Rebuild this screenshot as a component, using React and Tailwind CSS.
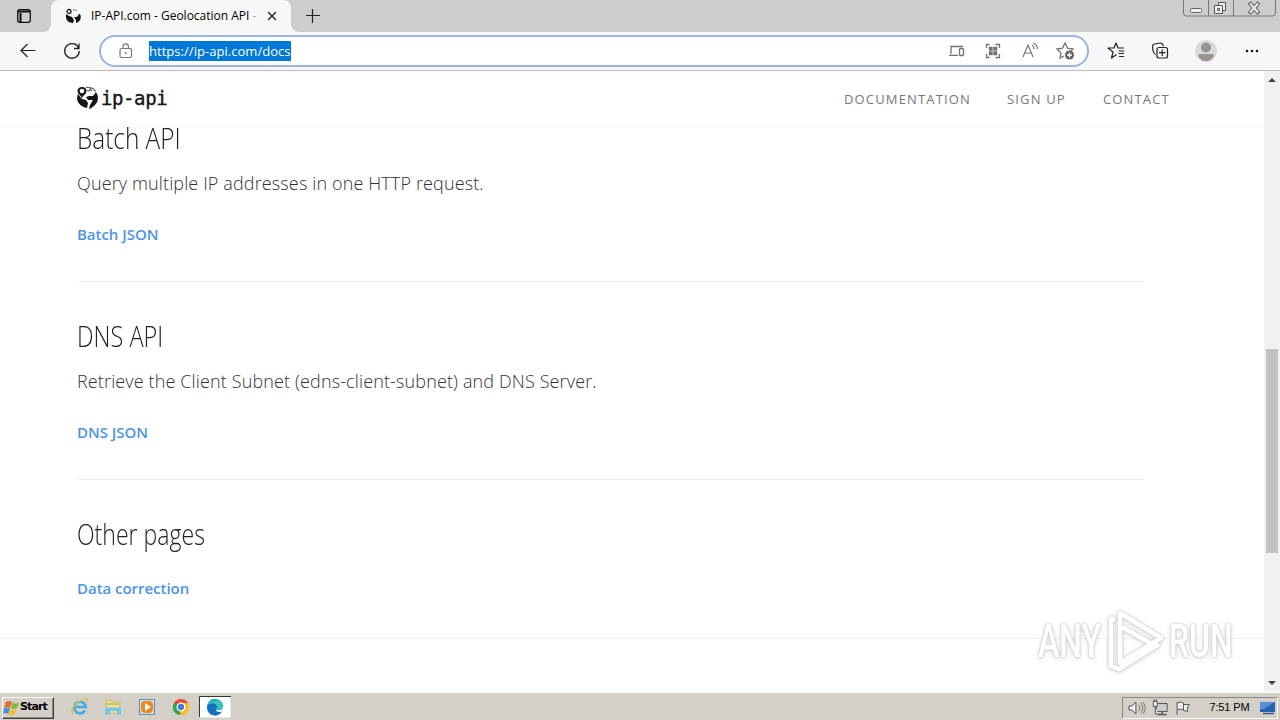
const links = [
  { label: 'DOCUMENTATION', className: 'w-[163px]' },
  { label: 'SIGN UP', className: 'w-24' },
  { label: 'CONTACT', className: 'w-[161px]' },
]

function Globe({ className }) {
  return (
    <svg className={className} viewBox="0 0 22 24" fill="#151515">
      <path d="M1 8l4 5 4 1 2 3-1 5c-5-1-9-4-10-9q0-3 1-5z" />
      <path d="M12 23l1-4 3-5-5 0-2-3 3-1 4 0 3-4q2 3 2 6 0 4-3 7-3 3-6 4z" />
      <path d="M5 1C2 1 .5 3 .5 5c0 3 3 4 4.500 7 1.500-3 4.500-4 4.500-7 0-2-1.500-4-4.500-4z" />
      <circle cx="5" cy="5" r="2.300" fill="#fff" />
      <path d="M9 1.500q6-1 10 4M10 4l2 1 1-2 2 2" fill="none" stroke="#666" strokeWidth="1.200" />
    </svg>
  )
}

function FavIcon() {
  return (
    <svg className="h-4 w-[17px]" viewBox="0 0 17 16" fill="#111">
      <path d="M1 6l3 2 3 1 2 3-1 3C4 15 1 12 1 9z" />
      <path d="M9 9l3 0 2-3 1 0c2 4 0 8-4 9l0-3z" />
      <circle cx="4" cy="3.500" r="2" fill="none" stroke="#222" strokeWidth="1.300" />
      <path d="M8 2q3-1 4 1" fill="none" stroke="#777" />
    </svg>
  )
}

function Tabs() {
  return (
    <div className="flex h-8 bg-[#cdcdcd]">
      <div className="w-[43px] pl-4 pt-2">
        <svg className="h-4 w-4" viewBox="0 0 16 16" fill="none" stroke="#111" strokeWidth="1.3">
          <rect x="1.7" y="1.7" width="12.6" height="12.6" rx="2" />
          <path d="M2 3.5h12M4.5 5v9" strokeWidth="2" />
        </svg>
      </div>
      <div className="flex w-2 items-end bg-[#f7f7f7]">
        <div className="h-full w-2 rounded-br-lg bg-[#cdcdcd]" />
      </div>
      <div className="bg-[#cdcdcd]">
        <div className="flex h-8 w-60 items-center rounded-t-lg bg-[#f7f7f7] pl-[14px]">
          <FavIcon />
          <span className="ml-[9px] w-[166px] overflow-hidden whitespace-nowrap font-['Open_Sans',sans-serif] text-[12px] text-black">
            IP-API.com - Geolocation API <span className="text-gray-400">-</span>
          </span>
          <svg className="ml-[9px] h-3 w-3 shrink-0" viewBox="0 0 12 12" stroke="#222" strokeWidth="1.4">
            <path d="M2 2l8 8M10 2l-8 8" />
          </svg>
        </div>
      </div>
      <div className="w-2 bg-[#f7f7f7]">
        <div className="h-full w-2 rounded-bl-lg bg-[#cdcdcd]" />
      </div>
      <svg className="ml-[6px] mt-2 h-4 w-4" viewBox="0 0 16 16" stroke="#222" strokeWidth="1.2">
        <path d="M1 7.5h14M7.500 1v14" />
      </svg>
      <svg className="ml-auto mr-1 h-[18px] w-[93px]" viewBox="0 0 93 18" fill="none" stroke="#777">
        <path d="M.5 0v13q0 3 3 3h86q3 0 3-3V0M25.500 0v16M50.500 0v16" />
        <rect x="7.500" y="8.500" width="11" height="4" rx="1" fill="#eee" stroke="#666" />
        <path d="M35.500 2.500h7v8h-7z" fill="#eee" stroke="#555" />
        <path d="M31.500 5.500h8v8h-8z" fill="#eee" stroke="#555" />
        <path d="M34.500 8.500h2v2h-2z" stroke="#555" />
        <path d="M67.500 4l7 8M74.500 4l-7 8" stroke="#555" strokeWidth="4" strokeLinecap="square" />
        <path d="M67.500 4l7 8M74.500 4l-7 8" stroke="#eee" strokeWidth="2" strokeLinecap="square" />
      </svg>
    </div>
  )
}

function AddressIcons() {
  return (
    <svg className="ml-auto mr-[11px] h-5 w-[128px]" viewBox="0 0 128 20" fill="none" stroke="#707070" strokeWidth="1.3">
      <path d="M3 13V5.500h12M1 14.300h9" />
      <rect x="11.500" y="7.500" width="4" height="7" rx="1" />
      <path d="M38.500 7V3.500h3M47.500 3.500h4V7M51.500 13v3.500h-4M41.500 16.500h-3V13" />
      <path d="M41 6h3.500v3.500h-3.500zM45.500 6h3.500v3.500h-3.500zM41 10.500h3.500v3.500h-3.500zM45.500 10.500h3.500v3.500h-3.500z" fill="#707070" stroke="#707070" strokeWidth=".4" />
      <path d="M75 16l5-12 5 12M77 12h6M84 4q2 1 2 4M85.500 2q4 2 4 6" strokeWidth="1.100" />
      <path d="M116 15l-4 2 1-5-4-4 5.500-.8L117 2l2.500 5.200L125 8l-2 2" />
      <circle cx="121.500" cy="14" r="4.500" fill="#606060" stroke="none" />
      <path d="M119 14h5M121.500 11.500v5" stroke="#fff" />
    </svg>
  )
}

function Toolbar() {
  return (
    <div className="flex h-[39px] items-center border-b border-[#bcbcbc] bg-[#f7f7f7]">
      <svg className="ml-5 h-4 w-4" viewBox="0 0 16 16" fill="none" stroke="#222" strokeWidth="1.2">
        <path d="M15.500 7.500H1M7.500 1L1 7.500 7.500 14" />
      </svg>
      <svg className="ml-[27px] h-[18px] w-[18px]" viewBox="0 0 18 18" fill="none" stroke="#222" strokeWidth="1.3">
        <path d="M15.700 6A7.300 7.300 0 1 0 16.300 9M16 1.500V6.500h-5" />
      </svg>
      <div className="ml-[18px] flex h-8 w-[990px] items-center rounded-full border-2 border-[#9bb5dd] bg-white">
        <svg className="ml-[18px] h-4 w-[14px]" viewBox="0 0 14 16" fill="none" stroke="#777" strokeWidth="1.2">
          <rect x="1" y="5.500" width="11.500" height="9" rx="1.500" />
          <path d="M4 5V3.500a2.700 2.700 0 0 1 5.400 0V5" />
          <circle cx="6.800" cy="10" r="1" fill="#777" stroke="none" />
        </svg>
        <span className="ml-4 h-5 w-[142px] overflow-hidden whitespace-nowrap bg-[#0078d7] font-['Open_Sans',sans-serif] text-[13px] leading-5 tracking-[0.04px] text-white">
          https://ip-api.com/docs
        </span>
        <AddressIcons />
      </div>
      <svg className="ml-[18px] h-6 w-[170px] shrink-0" viewBox="0 0 170 24" fill="none" stroke="#222" strokeWidth="1.2">
        <path d="M9.500 15.500L4.500 19l1.500-6-5-4h6L9 4l2 5h6M11.500 12h6M11.500 14.500h5.500M12 17.500h5" strokeLinejoin="round" />
        <path d="M48.500 15.500q-2-1-2.500-4l-.5-4q0-2 2-2.500l6-1q2 0 3 3" />
        <rect x="50" y="8.500" width="10.500" height="10.500" rx="2" />
        <path d="M55.200 10.500v6.400M52 13.700h6.400" />
        <circle cx="99" cy="12" r="11" fill="#dcdad8" stroke="none" />
        <circle cx="99" cy="8.500" r="5" fill="#969390" stroke="none" />
        <path d="M91 17q0-2 2-2h12q2 0 2 2-3 5-8 5t-8-5z" fill="#969390" stroke="none" />
        <g fill="#111" stroke="none">
          <circle cx="140" cy="12" r="1.300" />
          <circle cx="145" cy="12" r="1.300" />
          <circle cx="150" cy="12" r="1.300" />
        </g>
      </svg>
    </div>
  )
}

function Header() {
  return (
    <header className="flex h-[57px] shrink-0 items-center border-b border-[#f6f6f6] pl-[77px]">
      <Globe className="mb-[2px] h-6 w-[22px]" />
      <span className="mb-[2px] ml-[2px] w-[743px] whitespace-nowrap font-['DejaVu_Sans_Mono',monospace] text-[19px] leading-6 tracking-[-0.4px] text-[#151515] [-webkit-text-stroke:0.4px_#151515]">
        ip-api
      </span>
      <nav className="mt-px flex font-['Open_Sans',sans-serif] text-[13px] tracking-[1.15px] text-[#777]">
        {links.map((link) => (
          <a key={link.label} className={link.className}>{link.label}</a>
        ))}
      </nav>
    </header>
  )
}

function Heading({ children, className }) {
  return (
    <h2 className={`origin-left whitespace-nowrap font-['Open_Sans',sans-serif] text-[29px] font-light leading-8 text-[#222] ${className}`}>
      {children}
    </h2>
  )
}

function Body({ children, className }) {
  return (
    <p className={`whitespace-nowrap font-['Open_Sans',sans-serif] text-[18px] font-light leading-7 tracking-[0.13px] text-[#333] ${className}`}>
      {children}
    </p>
  )
}

function DocLink({ children, className }) {
  return (
    <a className={`block whitespace-nowrap font-['Open_Sans',sans-serif] text-[15px] font-semibold leading-6 tracking-[-0.03px] text-[#4c94e5] ${className}`}>
      {children}
    </a>
  )
}

function Watermark() {
  return (
    <div className="absolute left-[1038px] top-[538px] flex h-[64px] w-[196px] items-center justify-between font-['Roboto',sans-serif] text-[47px] font-medium text-white [filter:drop-shadow(0_0_1px_#c4c4c4)_drop-shadow(0_1px_2px_#d8d8d8)]">
      <span className="w-[65px]"><span className="inline-block origin-left scale-x-[.68]">ANY</span></span>
      <svg className="h-[62px] w-[58px]" viewBox="0 0 58 62" fill="none" stroke="#fff" strokeWidth="4.500">
        <path d="M13 3v50L54 28z" strokeLinejoin="round" />
        <path d="M8 9H4v47l8 3 40-25M15 17l28 16" />
      </svg>
      <span className="w-[65px]"><span className="inline-block origin-left scale-x-[.68]">RUN</span></span>
    </div>
  )
}

function Page() {
  return (
    <div className="relative flex h-[621px] bg-white">
      <div className="flex w-[1264px] flex-col">
        <Header />
        <main className="flex-1">
          <section className="ml-[77px] flow-root h-[154px] w-[1067px] border-b border-[#eee]">
            <Heading className="-mt-[6px] scale-x-[.84]">Batch API</Heading>
            <Body className="mt-[15px]">Query multiple IP addresses in one HTTP request.</Body>
            <DocLink className="mt-[25px]">Batch JSON</DocLink>
          </section>
          <section className="ml-[77px] h-[198px] w-[1067px] border-b border-[#eee] pt-[38px]">
            <Heading className="scale-x-[.81]">DNS API</Heading>
            <Body className="mt-[15px]">Retrieve the Client Subnet (edns-client-subnet) and DNS Server.</Body>
            <DocLink className="mt-[25px]">DNS JSON</DocLink>
          </section>
          <section className="h-[159px] border-b border-[#f0f0f0] pl-[77px] pt-[38px]">
            <Heading className="scale-x-[.795]">Other pages</Heading>
            <DocLink className="mt-[26px]">Data correction</DocLink>
          </section>
        </main>
      </div>
      <div className="flex w-4 flex-col items-center bg-[#f1f1f1]">
        <svg className="h-[278px] w-4" viewBox="0 0 16 278" fill="#444"><path d="M4 11l4-4 4 4z" /></svg>
        <div className="h-[204px] w-3 bg-[#c1c1c1]" />
        <svg className="h-[139px] w-4" viewBox="0 0 16 139" fill="#444"><path d="M4 128l4 4 4-4z" /></svg>
      </div>
      <Watermark />
    </div>
  )
}

function TaskIcons() {
  return (
    <svg className="ml-4 h-7 w-[165px]" viewBox="0 0 165 28" fill="none">
      <path d="M15 17.500a5.800 5.800 0 1 1 .8-3.500H5" stroke="#3caee8" strokeWidth="2.600" />
      <path d="M3 21C-1 16 10 5 17 6q1 1-1 3" stroke="#e8ba45" strokeWidth="1.400" />
      <path d="M36 7h5l1 2h8v11H36z" fill="#f7dc8c" stroke="#d8b866" />
      <path d="M37 11h12" stroke="#79b66c" />
      <path d="M35 14.500h16v7h-4v-3.500h-7v3.500h-5z" fill="#73c6ed" />
      <rect x="69.500" y="6.500" width="15" height="15" fill="#cce0ef" stroke="#5b8fb9" />
      <rect x="71" y="8" width="12" height="12" rx="4" fill="#f28618" />
      <path d="M75 10l6 4-6 4z" fill="#fff" />
      <circle cx="111" cy="14" r="8" fill="#e94435" />
      <path d="M111 14L104 10a8 8 0 0 0 6 12z" fill="#2da94f" />
      <path d="M111 14l-1 8a8 8 0 0 0 8-12h-7z" fill="#fbc316" />
      <circle cx="111" cy="14" r="3.800" fill="#397de7" stroke="#fff" strokeWidth="1.300" />
      <path d="M129.500 3.500h31v21h-31z" fill="#fff" />
      <path d="M129.500 24V3.500H161" stroke="#333" />
      <path d="M137 14a8 8 0 0 1 8-8c5 0 8 4 8 7 0 4-4 5-7 3.500 0 2 2 3 6 2a8 8 0 0 1-15-4.500z" fill="#1671c4" />
      <path d="M137.500 12c2-8 15-8 15.500 1 0 4-4 5-7 3.500 2-2 1-5-2-6q-3-1-6.500 1.500z" fill="#36c5b8" />
      <path d="M138 11c3-6 9-6 11-3-4-1-8 0-11 3z" fill="#1da6dc" />
    </svg>
  )
}

function Taskbar() {
  return (
    <div className="flex h-7 items-center border-t border-white bg-[#d4d0c8] text-black">
      <button className="ml-[2px] mt-[2px] flex h-[22px] w-[52px] items-center border border-b-[#404040] border-l-white border-r-[#404040] border-t-white shadow-[inset_-1px_-1px_#888]">
        <svg className="h-[18px] w-[17px] shrink-0" viewBox="0 0 17 18">
          <path d="M3 3q3-2 6 0L7 9Q4 7 1 9z" fill="#ea6831" />
          <path d="M9.500 3.500q3 2 6.500 0l-2 5.500q-3 2-6 0z" fill="#80ba32" />
          <path d="M1 9.500q3-2 6 0l-2 5.500q-3-2-5 0z" fill="#4095d8" />
          <path d="M7.500 10q3 2 6 0l-2 5.500q-3 2-6 0z" fill="#f2bd31" />
        </svg>
        <span className="font-['DejaVu_Sans',sans-serif] text-[11px] font-bold tracking-[-0.9px]">Start</span>
      </button>
      <TaskIcons />
      <div className="ml-auto mr-[2px] mt-[2px] flex h-[22px] w-[156px] items-center border border-b-white border-l-[#888] border-r-white border-t-[#888]">
        <svg className="ml-1 h-5 w-[68px]" viewBox="0 0 68 20" fill="#eee" stroke="#555">
          <path d="M2 8h3l4-4v12l-4-4H2z" />
          <path d="M12 7q2 3 0 6M14 5q4 5 0 10M16 4q5 6 0 12" fill="none" stroke="#777" />
          <path d="M29.500 5.500h11v8h-11z" fill="#ccc" />
          <path d="M31 16.500h9M35.500 14v3" strokeWidth="1.500" />
          <path d="M26.500 3.500v5h4v-5zM28.500 9v7h3M27.500 1v2M29.500 1v2" />
          <path d="M50.500 4v13M51 5q3-2 6 0v7q-3-2-6 0M57 6.500h6l-2 3 0 4-4-1" />
        </svg>
        <span className="ml-[15px] w-[42px] whitespace-nowrap font-['Liberation_Sans',sans-serif] text-[11px] tracking-[-0.1px]">7:51 PM</span>
        <svg className="ml-2 h-5 w-[18px] shrink-0" viewBox="0 0 18 20">
          <path d="M1 4h15v10H1z" fill="#2761b2" />
          <path d="M1 4h15L5 11H1z" fill="#5490d5" />
          <path d="M4 15.500h11" stroke="#345a88" strokeWidth="1.500" />
        </svg>
      </div>
    </div>
  )
}

export default function App() {
  return (
    <div className="h-[720px] w-[1280px] overflow-hidden bg-white">
      <Tabs />
      <Toolbar />
      <Page />
      <Taskbar />
    </div>
  )
}
